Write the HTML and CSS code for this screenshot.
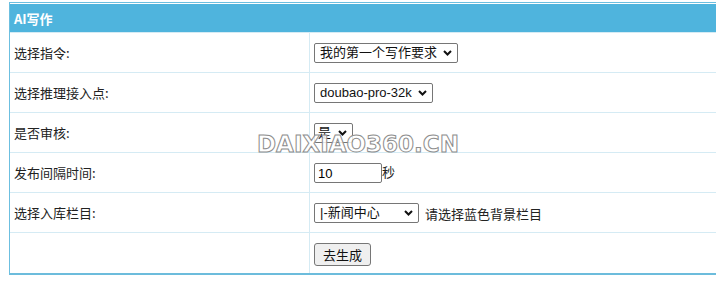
FILE: index.html
```html
<!DOCTYPE html>
<html lang="zh">
<head>
    <meta charset="UTF-8">
    <title>AI写作</title>
    <link rel="stylesheet" href="styles.css">
</head>
<body>
    <div class="wrap">
      <table class="form-table">
          <tr>
              <th colspan="2" class="title">AI写作</th>
          </tr>
          <tr>
              <td class="label">选择指令:</td>
              <td class="field">
                  <select class="sel sel-cmd">
                      <option>我的第一个写作要求</option>
                  </select>
              </td>
          </tr>
          <tr>
              <td class="label">选择推理接入点:</td>
              <td class="field">
                  <select class="sel sel-model">
                      <option>doubao-pro-32k</option>
                  </select>
              </td>
          </tr>
          <tr>
              <td class="label">是否审核:</td>
              <td class="field">
                  <select class="sel sel-check">
                      <option>是</option>
                      <option>否</option>
                  </select>
              </td>
          </tr>
          <tr>
              <td class="label">发布间隔时间:</td>
              <td class="field">
                  <input class="num" type="text" value="10">秒
              </td>
          </tr>
          <tr>
              <td class="label">选择入库栏目:</td>
              <td class="field">
                  <select class="sel sel-cat">
                      <option>|-新闻中心</option>
                  </select>
                  <span class="tip">请选择蓝色背景栏目</span>
              </td>
          </tr>
          <tr class="last">
              <td class="label"></td>
              <td class="field">
                  <button class="btn" type="button">去生成</button>
              </td>
          </tr>
      </table>

      <!-- 水印 -->
      <div class="watermark">DAIXIAO360.CN</div>
    </div>
</body>
</html>
```

FILE: styles.css
```css
  html, body {
      margin: 0;
      padding: 0;
      overflow: hidden;
      background-color: #fff;
  }

  body {
      font-family: "Noto Sans CJK SC", "Noto Sans", sans-serif;
      font-size: 13px;
      color: #222;
  }

  .wrap {
      position: relative;
      padding: 2px 0 0 9px;
  }

  .form-table {
      width: 720px;
      border-collapse: separate;
      border-spacing: 0;
      border: 1px solid #6cbfe0;
      border-bottom: 2px solid #6cbcdc;
  }

  .form-table td {
      border-right: 1px solid #d5ebf4;
      border-bottom: 1px solid #d5ebf4;
      height: 39px;
      padding: 0 4px;
      vertical-align: middle;
  }

  .form-table .last td {
      border-bottom: none;
      height: 40px;
  }

  .title {
      background-color: #4fb4dd;
      color: #fff;
      font-weight: bold;
      text-align: left;
      font-size: 13px;
      height: 28px;
      padding: 0 4px;
      border-top: 1px solid #fff;
      border-bottom: 1px solid #d5ebf4;
  }

  .label {
      width: 291px;
      color: #222;
  }

  .sel {
      -webkit-appearance: none;
      appearance: none;
      font-family: "Liberation Sans", "Noto Sans CJK SC", sans-serif;
      font-size: 13px;
      height: 20px;
      line-height: 18px;
      padding: 0 16px 0 5px;
      border: 1px solid #767676;
      border-radius: 2px;
      background-color: #fff;
      background-image: url("data:image/svg+xml,%3Csvg xmlns='http://www.w3.org/2000/svg' width='9' height='6' viewBox='0 0 9 6'%3E%3Cpath d='M1 1l3.5 3.5L8 1' fill='none' stroke='%23111' stroke-width='2'/%3E%3C/svg%3E");
      background-repeat: no-repeat;
      background-position: right 5px center;
      color: #111;
      vertical-align: middle;
  }

  .sel-cmd {
      width: 144px;
  }

  .sel-model {
      width: 119px;
  }

  .sel-check {
      width: 39px;
      padding-left: 3px;
  }

  .sel-cat {
      width: 105px;
  }

  .num {
      width: 60px;
      height: 16px;
      padding: 1px 3px;
      border: 1px solid #767676;
      border-radius: 2px;
      font-family: "Liberation Sans", sans-serif;
      font-size: 13px;
      vertical-align: middle;
      margin: 0;
  }

  .tip {
      margin-left: 3px;
      vertical-align: middle;
  }

  .btn {
      font-family: "Noto Sans CJK SC", "Noto Sans", sans-serif;
      font-size: 13px;
      height: 23px;
      width: 57px;
      padding: 0;
      border: 1px solid #767676;
      border-radius: 3px;
      background-color: #efefef;
      color: #111;
      margin-top: 3px;
  }

  .watermark {
      position: absolute;
      left: 257px;
      top: 131px;
      font-family: "DejaVu Sans", sans-serif;
      font-size: 23px;
      font-weight: bold;
      letter-spacing: 0;
      color: rgba(255, 255, 255, 0.85);
      -webkit-text-stroke: 1px #8d8d8d;
      pointer-events: none;
  }
```
